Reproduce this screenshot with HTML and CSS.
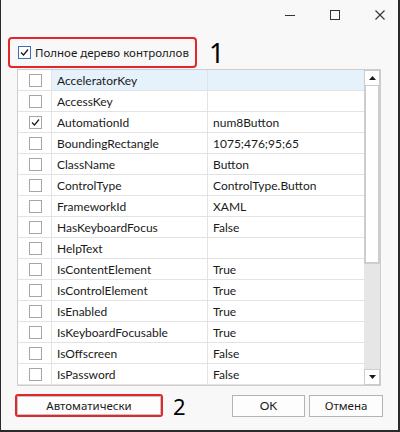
FILE: index.html
```html
<!DOCTYPE html>
<html>
<head>
<meta charset="utf-8">
<link rel="stylesheet" href="styles.css">
</head>
<body>
<div class="window">
  <div class="titlebar">
    <svg class="cap" width="10" height="10" viewBox="0 0 10 10"><path d="M0 5.5H10" stroke="#333" stroke-width="1"/></svg>
    <svg class="cap" width="10" height="10" viewBox="0 0 10 10"><rect x="0.5" y="0.5" width="9" height="9" fill="none" stroke="#333" stroke-width="1"/></svg>
    <svg class="cap" width="10" height="10" viewBox="0 0 10 10"><path d="M0.5 0.5L9.5 9.5M9.5 0.5L0.5 9.5" stroke="#333" stroke-width="1.1"/></svg>
  </div>

  <div class="toprow">
    <label class="redbox fullcheck">
      <svg class="cb" width="13" height="13" viewBox="0 0 13 13"><rect x="0.5" y="0.5" width="12" height="12" fill="#fff" stroke="#3d6fb4"/><path d="M3 6.5L5.5 9L10 3.5" fill="none" stroke="#1a1a1a" stroke-width="1.3"/></svg>
      <span class="ru">Полное дерево контроллов</span>
    </label>
    <span class="num num1">1</span>
  </div>

  <div class="grid">
    <div class="table">
      <div class="row sel"><div class="c1"><span class="gcb"></span></div><div class="c2">AcceleratorKey</div><div class="c3"></div></div>
      <div class="row"><div class="c1"><span class="gcb"></span></div><div class="c2">AccessKey</div><div class="c3"></div></div>
      <div class="row"><div class="c1"><span class="gcb checked"><svg width="11" height="11" viewBox="0 0 11 11"><path d="M2 5.5L4.5 8L9 2.5" fill="none" stroke="#1a1a1a" stroke-width="1.2"/></svg></span></div><div class="c2">AutomationId</div><div class="c3">num8Button</div></div>
      <div class="row"><div class="c1"><span class="gcb"></span></div><div class="c2">BoundingRectangle</div><div class="c3">1075;476;95;65</div></div>
      <div class="row"><div class="c1"><span class="gcb"></span></div><div class="c2">ClassName</div><div class="c3">Button</div></div>
      <div class="row"><div class="c1"><span class="gcb"></span></div><div class="c2">ControlType</div><div class="c3">ControlType.Button</div></div>
      <div class="row"><div class="c1"><span class="gcb"></span></div><div class="c2">FrameworkId</div><div class="c3">XAML</div></div>
      <div class="row"><div class="c1"><span class="gcb"></span></div><div class="c2">HasKeyboardFocus</div><div class="c3">False</div></div>
      <div class="row"><div class="c1"><span class="gcb"></span></div><div class="c2">HelpText</div><div class="c3"></div></div>
      <div class="row"><div class="c1"><span class="gcb"></span></div><div class="c2">IsContentElement</div><div class="c3">True</div></div>
      <div class="row"><div class="c1"><span class="gcb"></span></div><div class="c2">IsControlElement</div><div class="c3">True</div></div>
      <div class="row"><div class="c1"><span class="gcb"></span></div><div class="c2">IsEnabled</div><div class="c3">True</div></div>
      <div class="row"><div class="c1"><span class="gcb"></span></div><div class="c2">IsKeyboardFocusable</div><div class="c3">True</div></div>
      <div class="row"><div class="c1"><span class="gcb"></span></div><div class="c2">IsOffscreen</div><div class="c3">False</div></div>
      <div class="row"><div class="c1"><span class="gcb"></span></div><div class="c2">IsPassword</div><div class="c3">False</div></div>
    </div>
    <div class="scrollbar">
      <div class="sbtn"><svg width="7" height="4" viewBox="0 0 7 4"><path d="M3.5 0L7 4H0Z" fill="#1a1a1a"/></svg></div>
      <div class="thumb"></div>
      <div class="track"></div>
      <div class="sbtn"><svg width="7" height="4" viewBox="0 0 7 4"><path d="M0 0H7L3.5 4Z" fill="#1a1a1a"/></svg></div>
    </div>
  </div>

  <div class="bottom">
    <div class="redbox autobox"><button class="btn auto ru">Автоматически</button></div>
    <span class="num num2">2</span>
    <div class="spacer"></div>
    <button class="btn ok">OK</button>
    <button class="btn cancel ru">Отмена</button>
  </div>
</div>
</body>
</html>
```
FILE: styles.css
```css
* { box-sizing: border-box; }
html, body { margin: 0; padding: 0; }
body {
  font-family: "Lato", "Noto Sans", sans-serif;
  font-size: 12px;
  color: #1a1a1a;
  background: #f8f8f8;
}
.ru {
  font-family: "Noto Sans", "Open Sans", sans-serif;
  font-size: 11.5px;
}
.window {
  width: 400px;
  height: 432px;
  background: #f8f8f8;
  border-left: 1px solid #2a2a2a;
  border-right: 2px solid #2a2a2a;
  border-bottom: 2px solid #2a2a2a;
  display: flex;
  flex-direction: column;
}
.titlebar {
  height: 30px;
  display: flex;
  justify-content: flex-end;
  align-items: center;
  gap: 35px;
  padding-right: 13px;
}
.cap { display: block; }
.toprow {
  margin-top: 7px;
  padding-left: 7px;
  display: flex;
  align-items: center;
  height: 31px;
}
.redbox {
  border: 2px solid #e3262b;
  border-radius: 4px;
}
.fullcheck {
  width: 189px;
  height: 31px;
  display: flex;
  align-items: center;
  padding-left: 8px;
  gap: 4px;
  white-space: nowrap;
}
.cb { display: block; flex: none; }
.num {
  color: #000;
  font-family: "Noto Sans", sans-serif;
  line-height: 1;
}
.num1 { font-size: 27px; margin-left: 12px; }
.grid {
  margin-top: 1px;
  margin-left: 16px;
  width: 364px;
  height: 317px;
  border: 1px solid #cdcdcd;
  background: #fff;
  display: flex;
}
.table {
  width: 346px;
  display: flex;
  flex-direction: column;
}
.row {
  display: grid;
  grid-template-columns: 34px 156px 156px;
  height: 21px;
}
.row > div {
  border-bottom: 1px solid #e3e3e3;
  display: flex;
  align-items: center;
  white-space: nowrap;
  overflow: hidden;
}
.c1 { border-right: 1px solid #e3e3e3; justify-content: center; }
.c2 { border-right: 1px solid #e3e3e3; padding-left: 5px; }
.c3 { padding-left: 5px; }
.row.sel .c2, .row.sel .c3 { background: #e5f1fb; }
.gcb {
  width: 13px;
  height: 13px;
  border: 1px solid #a6a6a6;
  background: #fff;
  display: flex;
  align-items: center;
  justify-content: center;
  margin-left: 1px;
}
.gcb svg { display: block; }
.scrollbar {
  width: 16px;
  display: flex;
  flex-direction: column;
  background: #e6e6e6;
}
.sbtn {
  height: 16px;
  background: #fff;
  border: 1px solid #cccccc;
  display: flex;
  align-items: center;
  justify-content: center;
}
.sbtn svg { display: block; }
.thumb {
  height: 178px;
  background: #fff;
  border: 2px solid #cdcdcd;
  border-top-width: 0;
}
.track { flex: 1; }
.bottom {
  margin-top: 8px;
  display: flex;
  align-items: center;
  padding-left: 14px;
  padding-right: 15px;
}
.autobox {
  width: 148px;
  height: 23px;
  display: flex;
  border-radius: 3px;
}
.btn {
  font-family: "Lato", "Noto Sans", sans-serif;
  font-size: 12px;
  color: #1a1a1a;
  background: #fdfdfd;
  border: 1px solid #b4b4b4;
  padding: 0;
  margin: 0;
}
.btn.ru {
  font-family: "Noto Sans", "Open Sans", sans-serif;
  font-size: 11.5px;
}
.auto { flex: 1; border-color: #c4c4c4; }
.num2 { font-size: 22px; margin-left: 10px; }
.spacer { flex: 1; }
.ok { width: 73px; height: 22px; }
.cancel { width: 74px; height: 22px; margin-left: 4px; }
```
